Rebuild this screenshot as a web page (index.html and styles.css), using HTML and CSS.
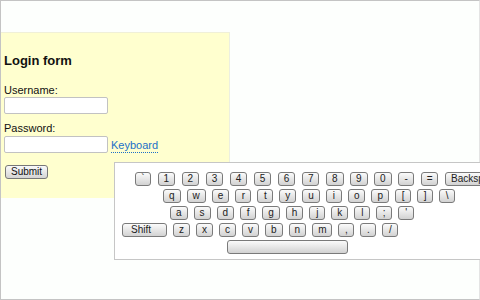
FILE: index.html
```html
<!DOCTYPE html>
<html lang="en">

<head>
    <meta charset="UTF-8">
    <title>Login form</title>
    <link rel="stylesheet" href="styles.css">
</head>

<body>
    <div class="page">
        <div class="login-panel">
            <h2>Login form</h2>
            <label for="username">Username:</label>
            <input type="text" id="username">
            <label for="password">Password:</label>
            <div class="password-row">
                <input type="password" id="password">
                <a href="#" class="keyboard-link">Keyboard</a>
            </div>
            <button class="submit-btn">Submit</button>
        </div>

        <div class="keyboard">
            <div class="kb-row row-1">
                <span class="key">`</span>
                <span class="key">1</span>
                <span class="key">2</span>
                <span class="key">3</span>
                <span class="key">4</span>
                <span class="key">5</span>
                <span class="key">6</span>
                <span class="key">7</span>
                <span class="key">8</span>
                <span class="key">9</span>
                <span class="key">0</span>
                <span class="key">-</span>
                <span class="key">=</span>
                <span class="key key-wide">Backspace</span>
            </div>
            <div class="kb-row row-2">
                <span class="key">q</span>
                <span class="key">w</span>
                <span class="key">e</span>
                <span class="key">r</span>
                <span class="key">t</span>
                <span class="key">y</span>
                <span class="key">u</span>
                <span class="key">i</span>
                <span class="key">o</span>
                <span class="key">p</span>
                <span class="key">[</span>
                <span class="key">]</span>
                <span class="key">\</span>
            </div>
            <div class="kb-row row-3">
                <span class="key">a</span>
                <span class="key">s</span>
                <span class="key">d</span>
                <span class="key">f</span>
                <span class="key">g</span>
                <span class="key">h</span>
                <span class="key">j</span>
                <span class="key">k</span>
                <span class="key">l</span>
                <span class="key">;</span>
                <span class="key">'</span>
            </div>
            <div class="kb-row row-4">
                <span class="key key-shift">Shift</span>
                <span class="key">z</span>
                <span class="key">x</span>
                <span class="key">c</span>
                <span class="key">v</span>
                <span class="key">b</span>
                <span class="key">n</span>
                <span class="key">m</span>
                <span class="key">,</span>
                <span class="key">.</span>
                <span class="key">/</span>
            </div>
            <div class="kb-row row-5">
                <span class="key key-space"></span>
            </div>
        </div>
    </div>
</body>

</html>
```

FILE: styles.css
```css
html,
body {
    margin: 0;
    padding: 0;
    overflow: hidden;
}

body {
    font-family: 'Liberation Sans', Arial, sans-serif;
    font-size: 11px;
    color: #111;
    background: #fff;
}

.page {
    position: relative;
    box-sizing: border-box;
    width: 480px;
    height: 300px;
    border: 1px solid #c4c4c4;
    border-right-color: #e4e4e4;
    background: #fdfffd;
}

.login-panel {
    box-sizing: border-box;
    width: 229px;
    height: 166px;
    margin-top: 31px;
    padding: 0 4px 0 3px;
    background: #ffffcf;
    border-top: 1px solid #f0f0d8;
    border-right: 1px solid #ecefe0;
}

.login-panel h2 {
    margin: 20px 0 0;
    font-size: 13px;
    line-height: 16px;
    font-weight: bold;
}

.login-panel label {
    display: block;
    line-height: 14px;
}

.login-panel label[for="username"] {
    margin-top: 14px;
}

.login-panel label[for="password"] {
    margin-top: 7px;
}

.login-panel input {
    box-sizing: border-box;
    width: 104px;
    height: 17px;
    margin: 0;
    padding: 1px 3px;
    border: 1px solid #c2c2c2;
    border-radius: 2px;
    background: #fff;
    font: inherit;
}

.password-row {
    display: flex;
    align-items: center;
    gap: 3px;
    margin-top: 1px;
}

.keyboard-link {
    color: #1c70c8;
    font-size: 11px;
    line-height: 14px;
    text-decoration: none;
    border-bottom: 1px dotted #1c70c8;
    margin-top: 2px;
}

.submit-btn {
    display: block;
    box-sizing: border-box;
    height: 14px;
    margin: 12px 0 0 1px;
    padding: 0 5px;
    font-family: 'Liberation Sans', Arial, sans-serif;
    font-size: 10px;
    line-height: 12px;
    color: #111;
    border: 1px solid #777;
    border-radius: 3px;
    background: linear-gradient(#fafafa, #d4d4d4);
}

/* on-screen keyboard, floats over the form */
.keyboard {
    position: absolute;
    left: 113px;
    top: 161px;
    width: 420px;
    height: 98px;
    box-sizing: border-box;
    padding-top: 9px;
    border: 1px solid #c6c6c6;
    background: #fff;
    display: flex;
    flex-direction: column;
    gap: 3px;
}

.kb-row {
    display: flex;
    gap: 6px;
}

.row-1 { padding-left: 20px; gap: 6.5px; }
.row-2 { padding-left: 48px; }
.row-3 { padding-left: 55px; }
.row-4 { padding-left: 7px; }
.row-5 { padding-left: 112px; }

.key {
    box-sizing: border-box;
    min-width: 16px;
    height: 14px;
    padding: 0 5px;
    font-family: 'Liberation Sans', Arial, sans-serif;
    font-size: 10px;
    line-height: 12px;
    text-align: center;
    color: #222;
    border: 1px solid #7a7a7a;
    border-radius: 3px;
    background: linear-gradient(#fbfbfb, #d2d2d2);
    white-space: nowrap;
}

.key-shift {
    width: 45px;
    text-align: left;
    padding-left: 8px;
}

.key-wide {
    text-align: left;
}

.key-space {
    width: 121px;
}
```
